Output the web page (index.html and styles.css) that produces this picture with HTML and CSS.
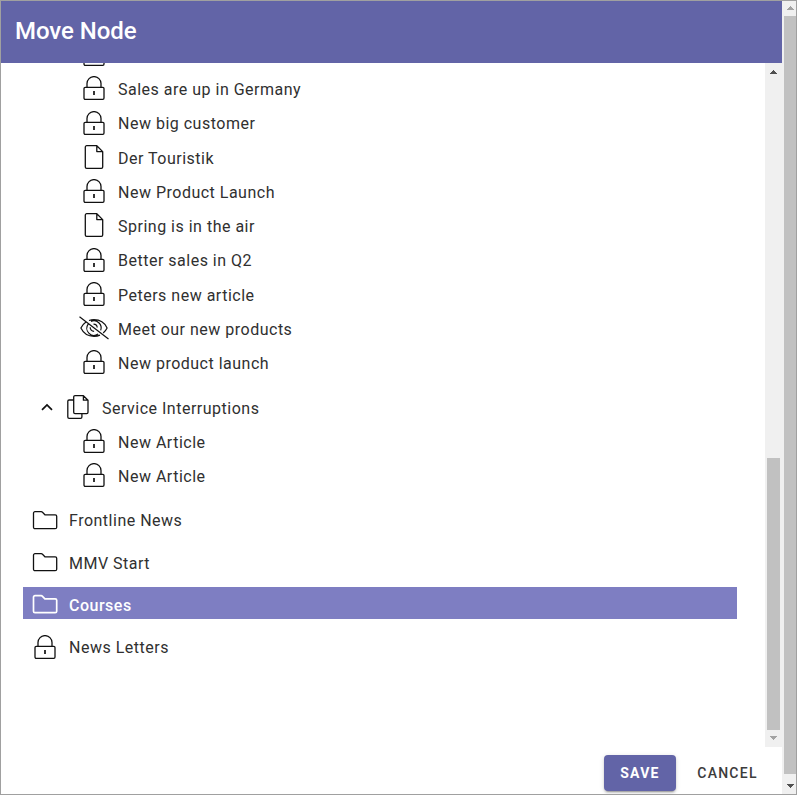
FILE: index.html
```html
<!DOCTYPE html>
<html lang="en">
<head>
<meta charset="utf-8">
<title>Move Node</title>
<link rel="stylesheet" href="styles.css">
</head>
<body>
<svg class="sprite" aria-hidden="true">
  <symbol id="lock" viewBox="0 0 24 24"><rect x="2" y="11.4" width="20" height="11.9" rx="1.2"/><path d="M5 11.4V7.6a7 7 0 0 1 14 0v3.8"/><path class="bold" d="M12 15v4"/></symbol>
  <symbol id="page" viewBox="0 0 24 24"><path d="M14.8.7H4.700a1.400 1.400 0 0 0-1.400 1.400v19.800a1.400 1.400 0 0 0 1.400 1.400h14.600a1.400 1.400 0 0 0 1.400-1.400V6.600zM14.800.700v5.900h5.900"/></symbol>
  <symbol id="pages" viewBox="0 0 24 24"><path d="M17.400.700H9a1.300 1.300 0 0 0-1.300 1.300v15.300a1.300 1.300 0 0 0 1.300 1.300h11.700a1.300 1.300 0 0 0 1.300-1.300V5.200zM17.400.700v4.500H22M7.700 5H3.100a1.300 1.300 0 0 0-1.300 1.300v15.700a1.300 1.300 0 0 0 1.300 1.300h11.500a1.300 1.300 0 0 0 1.300-1.300v-3.400"/></symbol>
  <symbol id="folder" viewBox="0 0 26 20"><path d="M1.500 3.200A1.500 1.500 0 0 1 3 1.700h6.200c.6 0 .9.200 1.300.6l2.400 2.500h10.300a1.500 1.500 0 0 1 1.500 1.500v10.900a1.500 1.500 0 0 1-1.500 1.500H3a1.500 1.500 0 0 1-1.500-1.500z"/></symbol>
  <symbol id="hidden" viewBox="0 0 30 24"><path d="M.5.8 29.500 23M7 5.900C4.800 7.400 3 9.400 1.900 12c2.500 5.300 7.300 8.300 13.100 8.300 2.200 0 4.200-.4 6-1.200M10 4.500c1.500-.5 3.200-.8 5-.8 5.800 0 10.600 3 13.100 8.300-.9 1.900-2.200 3.600-3.900 4.900M9.300 7.800a7.200 7.200 0 0 0 9.800 10.300M12 5.400a7.200 7.200 0 0 1 9.700 9M14.500 8.200c2 0 3.600 1.400 3.700 3.300M11.200 11.300c-.1 2.300 1.500 4 3.900 4.100"/></symbol>
  <symbol id="chevron" viewBox="0 0 12 8"><path d="M1 6.900 6 1.900l5 5"/></symbol>
</svg>
<div class="window">
  <main class="dialog">
    <header class="title">Move Node</header>
    <div class="body">
      <div class="tree">
        <ul class="children">
          <li class="row"><svg class="icon"><use href="#lock"/></svg></li>
          <li class="row"><svg class="icon"><use href="#lock"/></svg><span>Sales are up in Germany</span></li>
          <li class="row"><svg class="icon"><use href="#lock"/></svg><span>New big customer</span></li>
          <li class="row"><svg class="icon"><use href="#page"/></svg><span>Der Touristik</span></li>
          <li class="row"><svg class="icon"><use href="#lock"/></svg><span>New Product Launch</span></li>
          <li class="row"><svg class="icon"><use href="#page"/></svg><span>Spring is in the air</span></li>
          <li class="row"><svg class="icon"><use href="#lock"/></svg><span>Better sales in Q2</span></li>
          <li class="row"><svg class="icon"><use href="#lock"/></svg><span>Peters new article</span></li>
          <li class="row"><svg class="icon eye"><use href="#hidden"/></svg><span>Meet our new products</span></li>
          <li class="row"><svg class="icon"><use href="#lock"/></svg><span>New product launch</span></li>
        </ul>
        <div class="row parent"><svg class="chevron"><use href="#chevron"/></svg><svg class="icon"><use href="#pages"/></svg><span>Service Interruptions</span></div>
        <ul class="children">
          <li class="row"><svg class="icon"><use href="#lock"/></svg><span>New Article</span></li>
          <li class="row"><svg class="icon"><use href="#lock"/></svg><span>New Article</span></li>
        </ul>
        <div class="root"><svg class="icon folder"><use href="#folder"/></svg><span>Frontline News</span></div>
        <div class="root"><svg class="icon folder"><use href="#folder"/></svg><span>MMV Start</span></div>
        <div class="root selected"><svg class="icon folder"><use href="#folder"/></svg><span>Courses</span></div>
        <div class="root"><svg class="icon"><use href="#lock"/></svg><span>News Letters</span></div>
      </div>
      <div class="scroll inner">
        <svg class="arrow dark" viewBox="0 0 7 4"><path d="M3 0h1v1h1v1h1v1h1v1H0V3h1V2h1V1h1z"/></svg>
        <div class="thumb"></div>
        <svg class="arrow" viewBox="0 0 7 4"><path d="M0 0h7v1H6v1H5v1H4v1H3V3H2V2H1V1H0z"/></svg>
      </div>
    </div>
    <footer class="actions">
      <button class="button save">SAVE</button>
      <button class="button cancel">CANCEL</button>
    </footer>
  </main>
  <div class="scroll outer">
    <svg class="arrow" viewBox="0 0 7 4"><path d="M3 0h1v1h1v1h1v1h1v1H0V3h1V2h1V1h1z"/></svg>
    <div class="thumb"></div>
    <svg class="arrow dark" viewBox="0 0 7 4"><path d="M0 0h7v1H6v1H5v1H4v1H3V3H2V2H1V1H0z"/></svg>
  </div>
</div>
</body>
</html>
```
FILE: styles.css
```css
* { box-sizing: border-box; }
body { margin: 0; font-family: Roboto, sans-serif; color: #303030; background: #fff; }
ul { list-style: none; margin: 0; padding: 0; }
.sprite { display: none; }
.window { display: flex; width: 797px; height: 795px; border: 1px solid #a0a0a0; overflow: hidden; }
.dialog { width: 781px; display: flex; flex-direction: column; }
.title { height: 62px; padding-left: 14px; background: #6264a7; color: #fff; font-size: 24px; font-weight: 500; letter-spacing: -.05px; line-height: 60px; }
.body { height: 684px; display: flex; overflow: hidden; }
.tree { width: 714px; margin: -25.900px 28px 0 22px; }
.row, .root { display: flex; align-items: center; font-size: 16px; letter-spacing: .5px; line-height: 20px; white-space: nowrap; }
.row { height: 34.250px; }
.row span { padding-top: 3.400px; }
.children .row { padding-left: 59px; gap: 12px; }
.icon { width: 24px; height: 24px; flex: none; fill: none; stroke: #111; stroke-width: 1.300; stroke-linejoin: round; }
.bold { stroke-width: 1.700; }
.icon.eye { width: 30px; margin: 0 -3px; stroke-width: 1.200; }
.parent { margin-top: 10.250px; padding-left: 18px; }
.parent .icon { margin: 0 12px 0 13px; }
.chevron { width: 12px; height: 8px; fill: none; stroke: #111; stroke-width: 1.700; }
.root { height: 32px; margin-bottom: 10.250px; padding-left: 10px; gap: 12px; }
.children + .root { margin-top: 10px; }
.root span { padding-top: 5.400px; }
.root .icon { margin-top: 3px; }
.root .icon.folder { width: 26px; height: 20px; margin: 2px -1px 0; }
.selected { background: #7e7ec2; color: #fff; font-weight: 500; }
.selected .icon { stroke: #fff; stroke-width: 1.700; }
.scroll { display: flex; flex-direction: column; align-items: center; background: #f0f0f0; flex: none; }
.arrow { width: 7px; height: 4px; fill: #a3a3a3; flex: none; }
.arrow.dark { fill: #505050; }
.thumb { background: #c1c1c1; }
.inner { width: 17px; padding: 7px 0 0; }
.inner .thumb { width: 13px; height: 272px; margin: 384px 0 6px; }
.outer { width: 14px; padding-top: 5px; }
.outer .thumb { width: 12px; height: 758px; margin: 6px 0 10px 2px; }
.outer .arrow { margin-left: 3px; }
.actions { flex: 1; display: flex; align-items: flex-start; justify-content: flex-end; gap: 6px; padding: 8px 9px 0 0; }
.button { height: 36px; border: 0; border-radius: 4px; padding: 0; font: 500 14px Roboto, sans-serif; letter-spacing: 1.250px; }
.save { width: 72px; background: #6264a7; color: #fff; font-weight: 700; box-shadow: 0 3px 1px -2px #0003, 0 2px 2px #0002, 0 1px 5px #0002; }
.cancel { width: 91px; background: none; color: #3c3c3c; }
```
